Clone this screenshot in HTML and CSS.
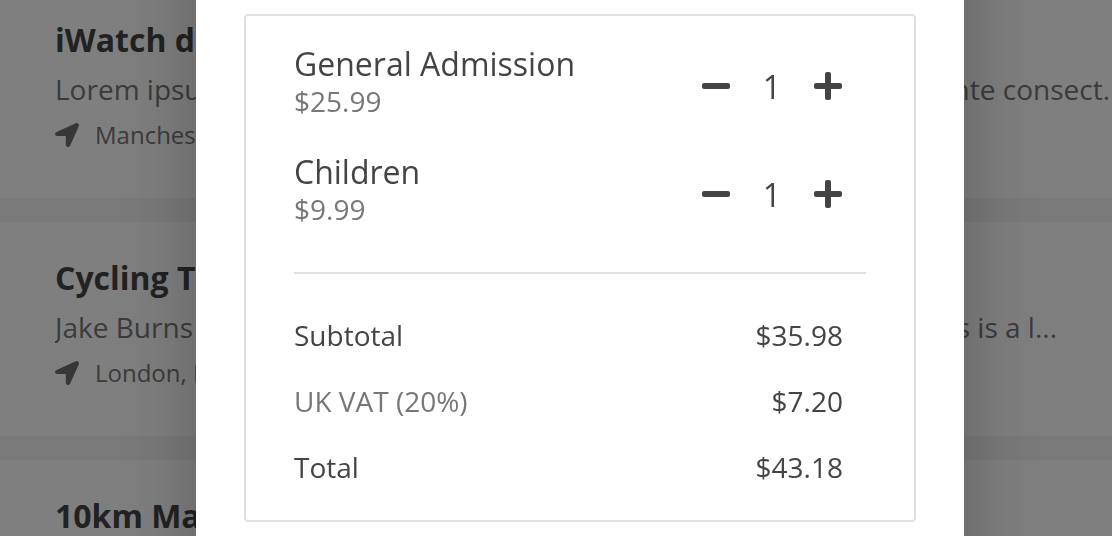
FILE: index.html
```html
<!DOCTYPE html>
<html lang="en">

	<head>
		<meta charset="utf-8">
		<title>Events</title>
		<link rel="stylesheet" href="styles.css">
	</head>

	<body>

		<main class="events">
			<article class="event">
				<h2>iWatch d</h2>
				<p class="excerpt"><span>Lorem ipsu</span><span>nte consect.</span></p>
				<p class="location">
					<svg class="arrow" viewBox="0 0 24 24"><path d="M20.800 .2 1.600 8.900C-.8 10-.2 13 2.300 13H10.800V21.600C10.800 24.300 14.200 24.900 15.200 22.500L23.800 3.200C24.600 1.300 22.700-.6 20.800 .2z"/></svg>
					<span>Manches</span>
				</p>
			</article>

			<article class="event">
				<h2>Cycling T</h2>
				<p class="excerpt short"><span>Jake Burns</span><span>s is a l...</span></p>
				<p class="location">
					<svg class="arrow" viewBox="0 0 24 24"><path d="M20.800 .2 1.600 8.900C-.8 10-.2 13 2.300 13H10.800V21.600C10.800 24.300 14.200 24.900 15.200 22.500L23.800 3.200C24.600 1.300 22.700-.6 20.800 .2z"/></svg>
					<span>London, I</span>
				</p>
			</article>

			<article class="event">
				<h2>10km Ma</h2>
			</article>
		</main>

		<div class="overlay">
			<div class="modal" role="dialog" aria-modal="true" aria-label="Tickets">
				<section class="order">
					<div class="ticket">
						<div class="info">
							<h3>General Admission</h3>
							<p>$25.99</p>
						</div>
						<div class="quantity">
							<button type="button" aria-label="Remove General Admission"><svg viewBox="0 0 28 28"><rect y="11" width="28" height="6" rx="2"/></svg></button>
							<output>1</output>
							<button type="button" aria-label="Add General Admission"><svg viewBox="0 0 28 28"><rect y="11" width="28" height="6" rx="2"/><rect x="11" width="6" height="28" rx="2"/></svg></button>
						</div>
					</div>
					<div class="ticket">
						<div class="info">
							<h3>Children</h3>
							<p>$9.99</p>
						</div>
						<div class="quantity">
							<button type="button" aria-label="Remove Children"><svg viewBox="0 0 28 28"><rect y="11" width="28" height="6" rx="2"/></svg></button>
							<output>1</output>
							<button type="button" aria-label="Add Children"><svg viewBox="0 0 28 28"><rect y="11" width="28" height="6" rx="2"/><rect x="11" width="6" height="28" rx="2"/></svg></button>
						</div>
					</div>

					<hr>

					<table class="totals">
						<tr>
							<th scope="row">Subtotal</th>
							<td>$35.98</td>
						</tr>
						<tr class="vat">
							<th scope="row">UK VAT (20%)</th>
							<td>$7.20</td>
						</tr>
						<tr>
							<th scope="row">Total</th>
							<td>$43.18</td>
						</tr>
					</table>
				</section>
			</div>
		</div>

	</body>

</html>
```

FILE: styles.css
```css
* {
	box-sizing: border-box;
}

body {
	margin: 0;
	height: 100vh;
	overflow: hidden;
	background: #f4f4f4;
	color: #444;
	font-family: "Open Sans", "Noto Sans", sans-serif;
	font-size: 28px;
}

h2, h3, p {
	margin: 0;
}

/* events list */
.events {
	display: flex;
	flex-direction: column;
	gap: 24px;
	height: 100vh;
	overflow: hidden;
}

.event {
	flex: none;
	background: #fff;
	padding: 32px 0 42px 55px;
}

.event:first-child {
	padding-top: 16px;
}

.event h2 {
	font-size: 32px;
	line-height: 48px;
	font-weight: 700;
}

.excerpt {
	display: flex;
	justify-content: space-between;
	padding-right: 2px;
	overflow: hidden;
	color: #777;
	line-height: 50px;
	white-space: nowrap;
}

.excerpt.short {
	padding-right: 55px;
}

.location {
	display: flex;
	align-items: center;
	gap: 16px;
	color: #777;
	font-size: 24px;
	line-height: 42px;
}

.arrow {
	width: 24px;
	height: 24px;
	fill: #6e6e6e;
}

/* modal */
.overlay {
	position: fixed;
	inset: 0;
	display: flex;
	justify-content: center;
	padding-left: 48px;
	overflow: hidden;
	background: rgba(0,0,0,0.5);
}

.modal {
	flex: 0 1 768px;
	margin: -100px 0;
	padding: 114px 48px;
	background: #fff;
	box-shadow: 0 0 80px rgba(0,0,0,0.25);
}

.order {
	padding: 28px 48px 20px;
	border: 2px solid #e0e0e0;
	border-radius: 4px;
}

.ticket {
	display: flex;
	justify-content: space-between;
	height: 84px;
	margin-bottom: 24px;
	padding-right: 24px;
}

.info h3 {
	font-size: 32px;
	line-height: 40px;
	font-weight: 400;
}

.info p {
	color: #777;
	line-height: 34px;
}

.quantity {
	display: flex;
	align-items: center;
}

.quantity button {
	width: 28px;
	height: 28px;
	padding: 0;
	border: none;
	background: none;
	cursor: pointer;
}

.quantity svg {
	display: block;
	fill: #444;
}

.quantity output {
	width: 84px;
	font-size: 32px;
	text-align: center;
}

hr {
	margin: 36px 0 28px;
	border: none;
	border-top: 2px solid #e0e0e0;
}

.totals {
	width: 100%;
	padding-right: 23px;
	border-spacing: 0;
	line-height: 66px;
}

.totals th {
	padding: 0;
	font-weight: 400;
	text-align: left;
}

.totals td {
	padding: 0;
	text-align: right;
}

.vat th {
	color: #777;
}
```
